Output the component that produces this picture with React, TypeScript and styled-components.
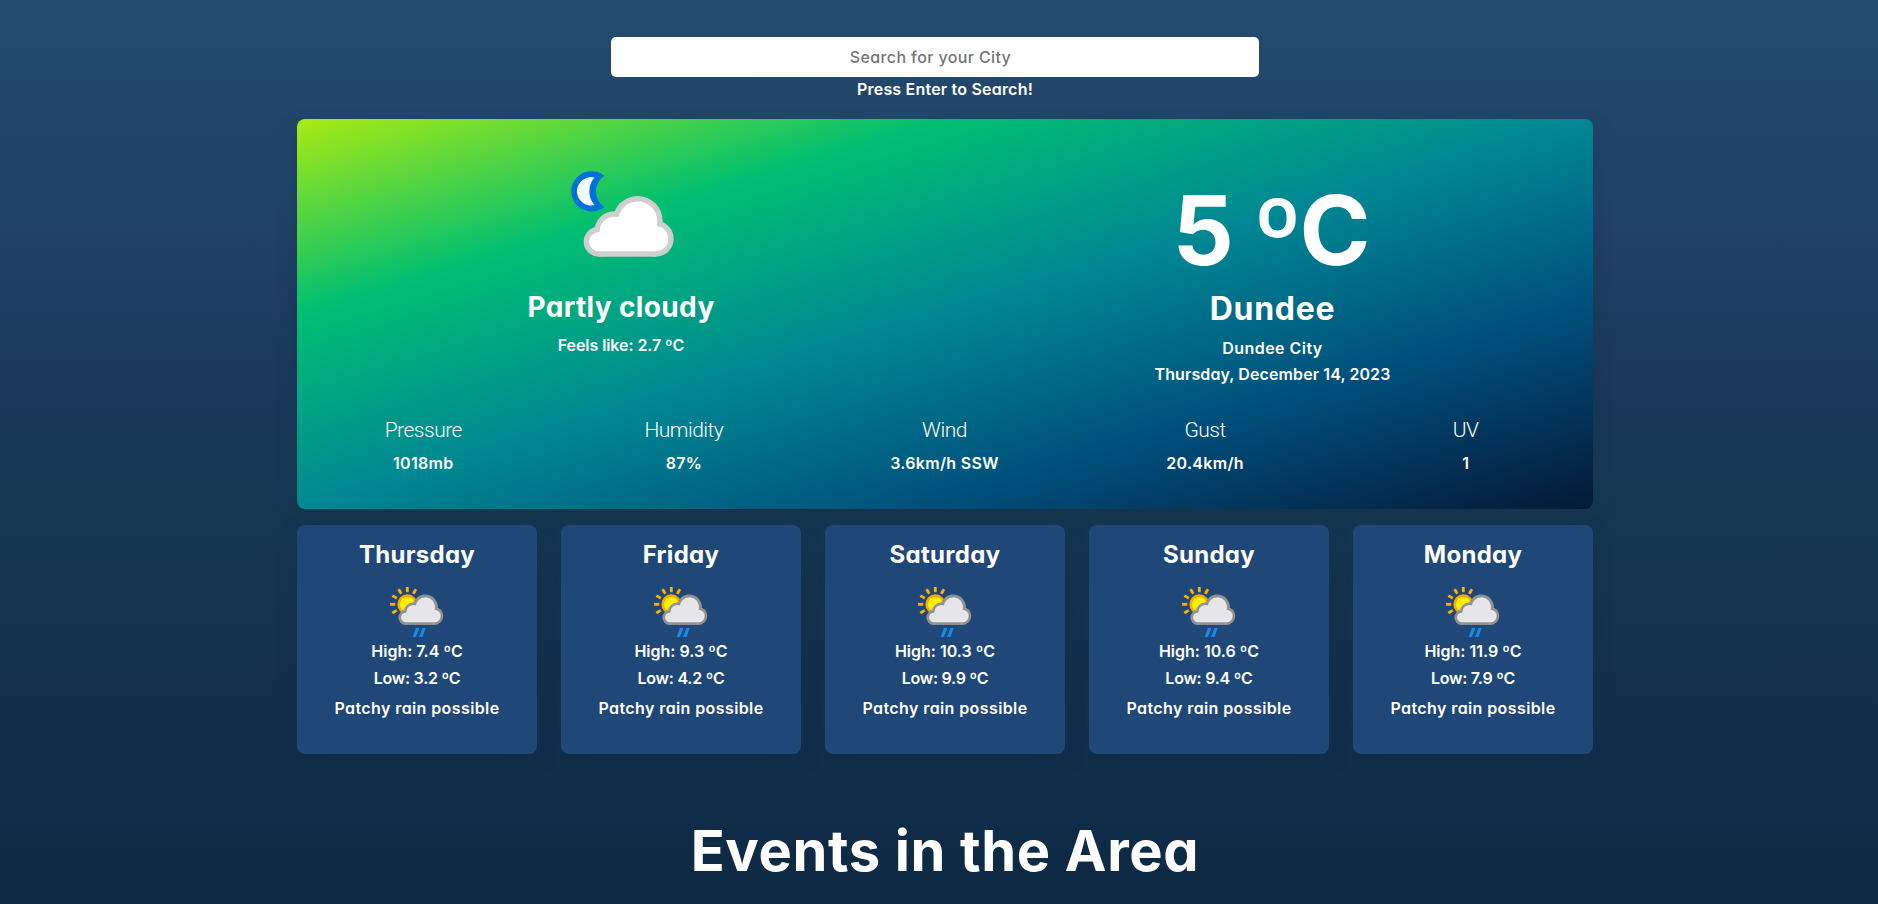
import React from "react";
import styled, { createGlobalStyle } from "styled-components";

const GlobalStyle = createGlobalStyle`
  * {
    box-sizing: border-box;
  }
  body {
    margin: 0;
    color: #fff;
    font-family: Inter, "Open Sans", sans-serif;
    font-feature-settings: "cv11";
    font-size: 16px;
    font-weight: 600;
    line-height: 24px;
  }
`;

const Page = styled.div`
  height: 904px;
  overflow: hidden;
  padding: 37px 0 0 297px;
  background: linear-gradient(
    180deg,
    #234a6d 0%,
    #21456a 18%,
    #1d3d62 34%,
    #193859 46%,
    #163855 54%,
    #143450 64%,
    #112e4c 82%,
    #0d2943 100%
  );
`;

const Content = styled.main`
  width: 1296px;
  display: flex;
  flex-direction: column;
  text-align: center;
  white-space: nowrap;
`;

const SearchForm = styled.form`
  display: flex;
  flex-direction: column;
  align-items: center;
  margin-bottom: 18px;
`;

const SearchInput = styled.input`
  width: 648px;
  height: 40px;
  margin-right: 20px;
  padding: 0 10px 0 1px;
  border: 0;
  border-radius: 5px;
  background: #fff;
  color: #333;
  text-align: center;
  font: inherit;
  font-weight: 500;
  letter-spacing: 0.38px;
  outline: none;

  &::placeholder {
    color: #757575;
    opacity: 1;
  }
`;

const Text = styled.p<{ $tracking?: number; $top?: number }>`
  margin: ${({ $top = 0 }) => $top}px 0 0;
  letter-spacing: ${({ $tracking = 0 }) => $tracking}px;
`;

const Hero = styled.section`
  height: 390px;
  padding-top: 32px;
  border-radius: 8px;
  background: linear-gradient(to left top, #051937, #004d7a, #008793, #00bf72, #a8eb12);
  box-shadow: 0 8px 20px rgba(18, 46, 60, 0.32);
`;

const Overview = styled.div`
  display: grid;
  grid-template-columns: 1fr 1fr;
  height: 235px;
`;

const Condition = styled.div`
  display: flex;
  flex-direction: column;
  align-items: center;
`;

const Place = styled.div`
  padding: 29px 0 0 7px;
`;

const ConditionName = styled.h2`
  margin: 7px 0 0;
  font-size: 28px;
  font-weight: 700;
  line-height: 42px;
  letter-spacing: 0.35px;
`;

const Temperature = styled.div`
  font-size: 96px;
  font-weight: 700;
  line-height: 100px;
  letter-spacing: -2px;
  padding-right: 4px;
`;

const Degree = styled.span`
  font-size: 104px;
  line-height: 0;
  vertical-align: -8px;
  letter-spacing: -3px;
`;

const City = styled.h1`
  margin: 7px 0 0;
  font-size: 32px;
  font-weight: 700;
  line-height: 44px;
  letter-spacing: 0.75px;
`;

const Stats = styled.dl`
  display: grid;
  grid-template-columns: repeat(5, 1fr);
  column-gap: 8px;
  margin: 30px 1px 0 0;
`;

const StatLabel = styled.dt`
  font-family: Roboto, sans-serif;
  font-size: 21px;
  font-weight: 300;
  line-height: 28px;
  letter-spacing: -0.5px;
`;

const StatValue = styled.dd`
  margin: 7px 0 0;
  letter-spacing: 0.3px;
`;

const Forecast = styled.section`
  display: grid;
  grid-template-columns: repeat(5, 240px);
  gap: 24px;
  margin-top: 16px;
`;

const DayCard = styled.article`
  height: 229px;
  padding-top: 12px;
  display: flex;
  flex-direction: column;
  align-items: center;
  border-radius: 8px;
  background: #1f4778;
  box-shadow: 0 8px 20px rgba(18, 46, 60, 0.32);
`;

const DayName = styled.h3`
  margin: 0 0 8px;
  font-size: 24px;
  font-weight: 700;
  line-height: 36px;
  letter-spacing: 0.3px;
`;

const EventsTitle = styled.h2`
  margin: 65px 0 0;
  font-size: 56px;
  font-weight: 700;
  line-height: 64px;
  letter-spacing: 0.65px;
`;

const Icon = styled.svg`
  display: block;
  flex: none;
`;

function Cloud({ edge, fill }: { edge: string; fill: string }) {
  return (
    <>
      <g fill={edge}>
        <circle cx="41.7" cy="90.7" r="15" />
        <circle cx="57.3" cy="80.3" r="20" />
        <circle cx="80.7" cy="70" r="25" />
        <circle cx="98.7" cy="87.7" r="18" />
        <path d="M41.7 80H98.7V105.7H41.7Z" />
      </g>
      <g fill={fill}>
        <circle cx="41.7" cy="90.7" r="9.6" />
        <circle cx="57.3" cy="80.3" r="14.6" />
        <circle cx="80.7" cy="70" r="19.6" />
        <circle cx="98.7" cy="87.7" r="12.6" />
        <path d="M41.7 82H98.7V100.3H41.7Z" />
      </g>
    </>
  );
}

function CloudyNightIcon() {
  return (
    <Icon width="128" height="128" viewBox="0 0 128 128" aria-hidden="true">
      <path fill="#0070dc" d="M47.3 24.7A20.2 20.2 0 1 0 47.3 56A18.9 18.9 0 0 1 47.3 24.7Z" />
      <path fill="#f4fbff" d="M37.5 26.5A14.2 14.2 0 1 0 37.5 54.1A21 21 0 0 1 37.5 26.5Z" />
      <Cloud edge="#cfcfcf" fill="#fff" />
    </Icon>
  );
}

const RAY_ANGLES = [-120, -90, -60, -30, 0, 30];

function PatchyRainIcon() {
  return (
    <Icon width="64" height="58" viewBox="0 0 64 58" aria-hidden="true">
      {RAY_ANGLES.map((angle) => (
        <path
          key={angle}
          d="M22.3 6V11.2"
          stroke="#ffb000"
          strokeWidth="2.8"
          transform={`rotate(${angle} 22.3 23.3)`}
        />
      ))}
      <circle cx="22.3" cy="23.3" r="8.7" fill="#fff000" stroke="#ffa800" strokeWidth="2.6" />
      <g transform="translate(0 -8.9) scale(.5)">
        <Cloud edge="#929292" fill="#e6e6e8" />
      </g>
      <path fill="#1a8ae8" d="M31 47H34.4L31 56H27.6ZM37.4 47H40.8L37.4 56H34Z" />
    </Icon>
  );
}

const stats = [
  { label: "Pressure", value: "1018mb" },
  { label: "Humidity", value: "87%" },
  { label: "Wind", value: "3.6km/h SSW" },
  { label: "Gust", value: "20.4km/h" },
  { label: "UV", value: "1" },
];

const days = [
  { name: "Thursday", high: "7.4", low: "3.2" },
  { name: "Friday", high: "9.3", low: "4.2" },
  { name: "Saturday", high: "10.3", low: "9.9" },
  { name: "Sunday", high: "10.6", low: "9.4" },
  { name: "Monday", high: "11.9", low: "7.9" },
];

export default function App() {
  return (
    <>
      <GlobalStyle />
      <Page>
        <Content>
          <SearchForm onSubmit={(event) => event.preventDefault()}>
            <SearchInput placeholder="Search for your City" />
            <Text $tracking={0.2}>Press Enter to Search!</Text>
          </SearchForm>

          <Hero>
            <Overview>
              <Condition>
                <CloudyNightIcon />
                <ConditionName>Partly cloudy</ConditionName>
                <Text $top={5} $tracking={-0.08}>Feels like: 2.7 ºC</Text>
              </Condition>
              <Place>
                <Temperature>
                  5 <Degree>º</Degree>C
                </Temperature>
                <City>Dundee</City>
                <Text $top={5} $tracking={0.45}>Dundee City</Text>
                <Text $top={2} $tracking={0.1}>Thursday, December 14, 2023</Text>
              </Place>
            </Overview>
            <Stats>
              {stats.map(({ label, value }) => (
                <div key={label}>
                  <StatLabel>{label}</StatLabel>
                  <StatValue>{value}</StatValue>
                </div>
              ))}
            </Stats>
          </Hero>

          <Forecast>
            {days.map(({ name, high, low }) => (
              <DayCard key={name}>
                <DayName>{name}</DayName>
                <PatchyRainIcon />
                <Text>High: {high} ºC</Text>
                <Text $top={3} $tracking={-0.25}>Low: {low} ºC</Text>
                <Text $top={6} $tracking={0.4}>Patchy rain possible</Text>
              </DayCard>
            ))}
          </Forecast>

          <EventsTitle>Events in the Area</EventsTitle>
        </Content>
      </Page>
    </>
  );
}
